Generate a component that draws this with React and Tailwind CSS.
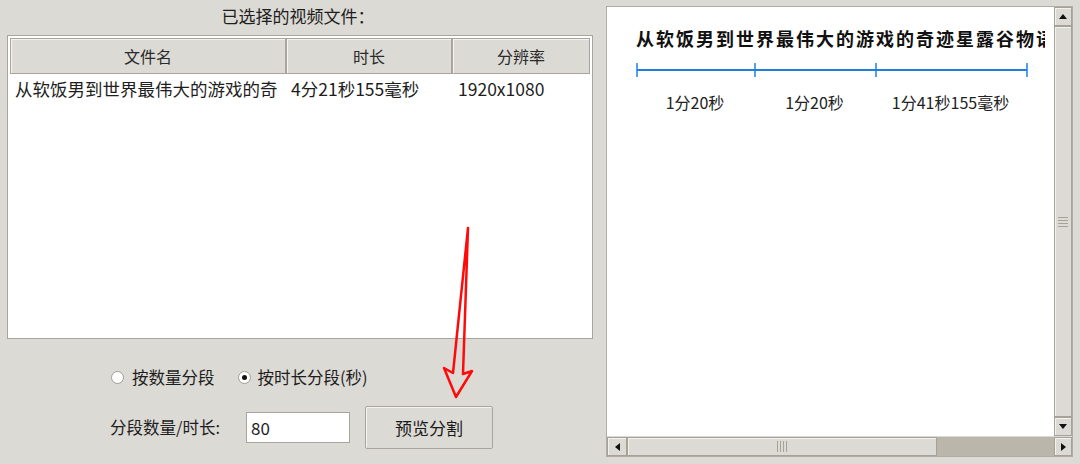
import React from 'react';

const Tri = function ({ dir }) {

    const pts = {
        up: "1,6 5,1 9,6",
        down: "1,1 5,6 9,1",
        left: "6,1 1,5 6,9",
        right: "1,1 6,5 1,9",
    }[dir];

    const vertical = dir === "up" || dir === "down";

    return (
        <svg width={vertical ? 10 : 7} height={vertical ? 7 : 10} viewBox={vertical ? "0 0 10 7" : "0 0 7 10"}>
            <polygon points={pts} fill="#111" />
        </svg>
    );
}

const ScrollBtn = function ({ dir, className }) {
    return (
        <div className={"flex items-center justify-center border border-[#a6a297] bg-[#dcdad5] shadow-[inset_1px_1px_0_#f3f2ef] " + className}>
            <Tri dir={dir} />
        </div>
    );
}

const HeaderCell = function ({ children, className }) {
    return (
        <div className={"flex items-center justify-center h-full border border-[#a8a59d] bg-[#dcdad5] shadow-[inset_1px_1px_0_#f4f3f0] text-[16px] text-[#2a2a2a] " + className}>
            {children}
        </div>
    );
}

const segments = [
    { w: 118, label: "1分20秒" },
    { w: 121, label: "1分20秒" },
    { w: 151, label: "1分41秒155毫秒" },
];

export default function App() {

    return (

        <div className="relative w-[1080px] h-[464px] overflow-hidden bg-[#dcdad5] flex font-['Noto_Sans_CJK_SC',sans-serif] text-[#1e1e1e]">

            {/* left side */}

            <div className="w-[606px] flex flex-col">

                <div className="h-[35px] flex items-center justify-center pr-[10px] pb-[4px] text-[17px]">
                    已选择的视频文件：
                </div>

                <div className="ml-[7px] w-[586px] h-[304px] border border-[#a8a59d] bg-white p-[2px] flex flex-col">

                    <div className="flex h-[36px]">
                        <HeaderCell className="w-[276px]">文件名</HeaderCell>
                        <HeaderCell className="w-[166px]">时长</HeaderCell>
                        <HeaderCell className="w-[138px]">分辨率</HeaderCell>
                    </div>

                    <div className="flex h-[30px] items-center text-[17.5px] whitespace-nowrap">
                        <div className="w-[276px] pl-[5px] overflow-hidden">从软饭男到世界最伟大的游戏的奇</div>
                        <div className="w-[166px] pl-[5px]">4分21秒155毫秒</div>
                        <div className="w-[138px] pl-[6px]">1920x1080</div>
                    </div>

                </div>

                <div className="mt-[25px] h-[26px] flex items-center pl-[111px] text-[16.5px]">
                    <div className="w-[13px] h-[13px] rounded-full border border-[#a09d95] bg-white" />
                    <span className="ml-[8px]">按数量分段</span>
                    <div className="ml-[23px] w-[13px] h-[13px] rounded-full border border-[#a09d95] bg-white flex items-center justify-center">
                        <div className="w-[5px] h-[5px] rounded-full bg-[#111]" />
                    </div>
                    <span className="ml-[7px]">按时长分段(秒)</span>
                </div>

                <div className="mt-[16px] h-[43px] flex items-center pl-[110px] text-[16.5px]">
                    <span className="w-[136px]">分段数量/时长:</span>
                    <div className="w-[104px] h-[31px] border border-[#a8a59d] bg-white flex items-center pl-[4px] text-[17px]">80</div>
                    <div className="ml-[15px] w-[128px] h-[43px] border border-[#a8a59d] rounded-[2px] bg-[#dcdad5] shadow-[inset_1px_1px_0_#f4f3f0] flex items-center justify-center text-[17px] text-[#1a1a1a]">
                        预览分割
                    </div>
                </div>

            </div>

            {/* right side */}

            <div className="mt-[6px] w-[467px] h-[451px] border border-[#b0ada5] flex flex-col">

                <div className="flex h-[430px]">

                    <div className="w-[447px] h-full bg-white overflow-hidden pl-[29px] pt-[18px]">

                        <div className="w-[409px] overflow-hidden whitespace-nowrap text-[18px] leading-[26px] font-bold tracking-[2px] text-[#111]">
                            从软饭男到世界最伟大的游戏的奇迹星露谷物语
                        </div>

                        <svg className="mt-[11px] block" width="394" height="16" viewBox="0 0 394 16">
                            <line x1="1" y1="8" x2="391" y2="8" stroke="#1f7fe0" strokeWidth="2" />
                            <line x1="1" y1="1" x2="1" y2="15" stroke="#1f7fe0" strokeWidth="1.5" />
                            <line x1="119" y1="1" x2="119" y2="15" stroke="#1f7fe0" strokeWidth="1.5" />
                            <line x1="240" y1="1" x2="240" y2="15" stroke="#1f7fe0" strokeWidth="1.5" />
                            <line x1="391" y1="1" x2="391" y2="15" stroke="#1f7fe0" strokeWidth="1.5" />
                        </svg>

                        <div className="flex mt-[12px] text-[16px] text-[#222]">
                            {segments.map((s, i) => (
                                <div key={i} className="text-center whitespace-nowrap" style={{ width: s.w }}>{s.label}</div>
                            ))}
                        </div>

                    </div>

                    <div className="w-[18px] h-full flex flex-col">
                        <ScrollBtn dir="up" className="h-[19px]" />
                        <div className="flex-1 border border-[#a6a297] bg-[#dcdad5] shadow-[inset_1px_1px_0_#f3f2ef] flex flex-col items-center justify-center gap-[2px]">
                            <div className="w-[10px] h-px bg-[#a6a297]" />
                            <div className="w-[10px] h-px bg-[#a6a297]" />
                            <div className="w-[10px] h-px bg-[#a6a297]" />
                            <div className="w-[10px] h-px bg-[#a6a297]" />
                        </div>
                        <ScrollBtn dir="down" className="h-[19px]" />
                    </div>

                </div>

                <div className="flex h-[19px] mt-[1px]">
                    <ScrollBtn dir="left" className="w-[20px]" />
                    <div className="w-[310px] border border-[#a6a297] bg-[#dcdad5] shadow-[inset_1px_1px_0_#f3f2ef] flex items-center justify-center gap-[2px]">
                        <div className="w-px h-[11px] bg-[#a6a297]" />
                        <div className="w-px h-[11px] bg-[#a6a297]" />
                        <div className="w-px h-[11px] bg-[#a6a297]" />
                        <div className="w-px h-[11px] bg-[#a6a297]" />
                    </div>
                    <div className="flex-1 bg-[#bab6ab]" />
                    <ScrollBtn dir="right" className="w-[18px]" />
                </div>

            </div>

            {/* annotation arrow */}

            <svg className="absolute left-0 top-0 pointer-events-none" width="1080" height="464" viewBox="0 0 1080 464">
                <polygon points="468,228 453,373 444,368 456,397 472,371 463,374" fill="none" stroke="#ff0a0a" strokeWidth="2.5" strokeLinejoin="round" />
            </svg>

        </div>

    );
}
